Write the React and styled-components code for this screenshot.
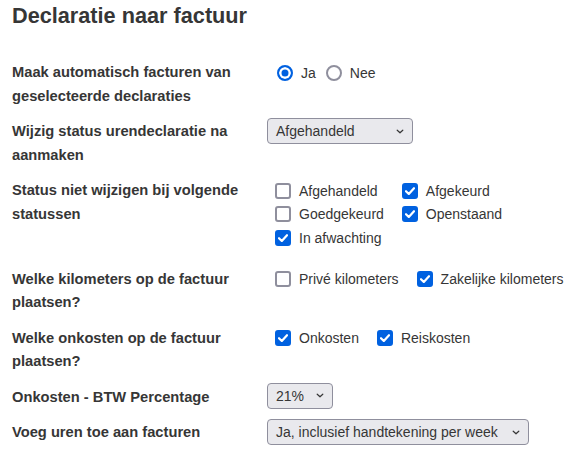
import React from "react";
import styled, { createGlobalStyle } from "styled-components";

const Global = createGlobalStyle`
  html, body { margin: 0; padding: 0; background: #fff; }
  body {
    font-family: "Liberation Sans", Arial, sans-serif;
    color: #363636;
  }
`;

const Page = styled.div`
  padding: 3px 12px 0;
`;

const Title = styled.h1`
  margin: 0;
  font-size: 21.7px;
  line-height: 25px;
  font-weight: 700;
  color: #363636;
`;

const Form = styled.div`
  display: grid;
  grid-template-columns: 255px auto;
  row-gap: 12px;
  margin-top: 33px;
  align-items: start;
`;

const Label = styled.div`
  font-size: 14.7px;
  font-weight: 700;
  line-height: 23.5px;
  padding-right: 8px;
  color: #363636;
`;

const Field = styled.div`
  display: flex;
  flex-direction: column;
  align-items: flex-start;
  padding-bottom: ${(p) => p.$pb || 0}px;
`;

const Inline = styled.div`
  display: flex;
  align-items: center;
  gap: ${(p) => p.$gap || 0}px;
`;

const CheckGrid = styled.div`
  display: grid;
  grid-template-columns: auto auto;
  column-gap: 10px;
  justify-content: start;
`;

const Option = styled.label`
  display: flex;
  align-items: center;
  height: 23.5px;
  font-size: 14px;
  color: #363636;
  white-space: nowrap;
`;

const RadioCircle = styled.span`
  box-sizing: border-box;
  width: 16px;
  height: 16px;
  border-radius: 50%;
  margin: 0 8px 0 10px;
  border: 2px solid ${(p) => (p.$checked ? "#0061e0" : "#8f8f9d")};
  background: ${(p) => (p.$checked ? "#0061e0" : "#fff")};
  box-shadow: ${(p) => (p.$checked ? "inset 0 0 0 2.5px #fff" : "none")};
  flex: none;
`;

const Box = styled.span`
  box-sizing: border-box;
  width: 16px;
  height: 16px;
  border-radius: 3px;
  margin: 0 8px;
  flex: none;
  display: flex;
  align-items: center;
  justify-content: center;
  border: 2px solid ${(p) => (p.$checked ? "#0061e0" : "#8f8f9d")};
  background: ${(p) => (p.$checked ? "#0061e0" : "#fff")};
`;

const SelectBox = styled.div`
  box-sizing: border-box;
  width: ${(p) => p.$w}px;
  height: 26px;
  margin-top: ${(p) => p.$mt || 0}px;
  display: flex;
  align-items: center;
  justify-content: space-between;
  padding: 0 8px;
  background: #e9e9ed;
  border: 1px solid #8f8f9d;
  border-radius: 4px;
  font-size: 14px;
  color: #363636;
  white-space: nowrap;
`;

const Check = () => (
  <svg width="10" height="8" viewBox="0 0 10 8">
    <path d="M1 4.2 L3.8 7 L9 1.2" fill="none" stroke="#fff" strokeWidth="2.2" strokeLinecap="round" strokeLinejoin="round" />
  </svg>
);

const Chevron = () => (
  <svg width="8" height="5" viewBox="0 0 8 5">
    <path d="M1.2 1.2 L4 3.8 L6.8 1.2" fill="none" stroke="#363636" strokeWidth="1.2" strokeLinecap="round" strokeLinejoin="round" />
  </svg>
);

const Checkbox = ({ checked, children }) => (
  <Option>
    <Box $checked={checked}>{checked && <Check />}</Box>
    {children}
  </Option>
);

const Radio = ({ checked, children }) => (
  <Option>
    <RadioCircle $checked={checked} />
    {children}
  </Option>
);

const Select = ({ w, mt, children }) => (
  <SelectBox $w={w} $mt={mt}>
    <span>{children}</span>
    <Chevron />
  </SelectBox>
);

export default function App() {
  return (
    <Page>
      <Global />
      <Title>Declaratie naar factuur</Title>
      <Form>
        <Label>Maak automatisch facturen van geselecteerde declaraties</Label>
        <Field>
          <Inline>
            <Radio checked>Ja</Radio>
            <Radio>Nee</Radio>
          </Inline>
        </Field>

        <Label>Wijzig status urendeclaratie na aanmaken</Label>
        <Field>
          <Select w={146} mt={-2}>Afgehandeld</Select>
        </Field>

        <Label>Status niet wijzigen bij volgende statussen</Label>
        <Field $pb={6}>
          <CheckGrid>
            <Checkbox>Afgehandeld</Checkbox>
            <Checkbox checked>Afgekeurd</Checkbox>
            <Checkbox>Goedgekeurd</Checkbox>
            <Checkbox checked>Openstaand</Checkbox>
            <Checkbox checked>In afwachting</Checkbox>
          </CheckGrid>
        </Field>

        <Label>Welke kilometers op de factuur plaatsen?</Label>
        <Field>
          <Inline $gap={10}>
            <Checkbox>Privé kilometers</Checkbox>
            <Checkbox checked>Zakelijke kilometers</Checkbox>
          </Inline>
        </Field>

        <Label>Welke onkosten op de factuur plaatsen?</Label>
        <Field>
          <Inline $gap={10}>
            <Checkbox checked>Onkosten</Checkbox>
            <Checkbox checked>Reiskosten</Checkbox>
          </Inline>
        </Field>

        <Label>Onkosten - BTW Percentage</Label>
        <Field>
          <Select w={66} mt={-3}>21%</Select>
        </Field>

        <Label>Voeg uren toe aan facturen</Label>
        <Field>
          <Select w={262} mt={-2}>Ja, inclusief handtekening per week</Select>
        </Field>
      </Form>
    </Page>
  );
}
